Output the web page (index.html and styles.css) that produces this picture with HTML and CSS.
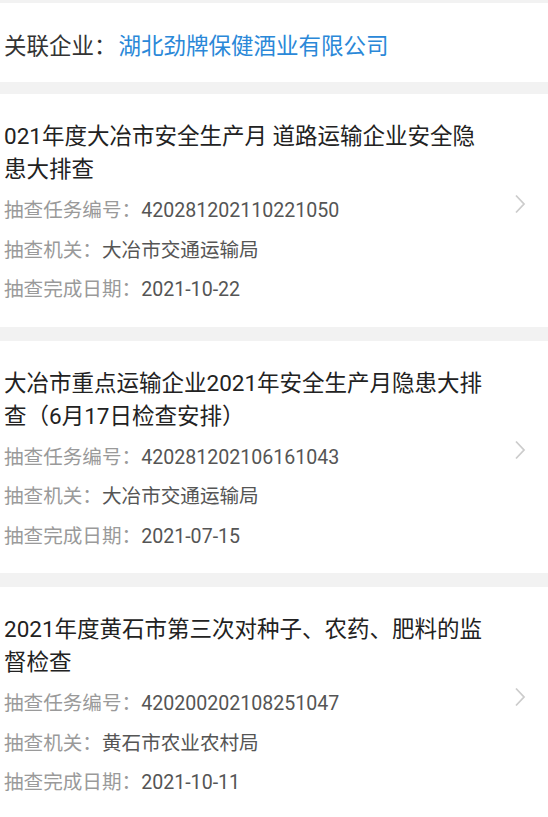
FILE: index.html
```html
<!DOCTYPE html>
<html lang="zh-CN">
<head>
  <meta charset="UTF-8">
  <meta name="viewport" content="width=device-width, initial-scale=1">
  <title>抽查检查</title>
  <link rel="stylesheet" href="styles.css">
</head>
<body>
  <!-- 关联企业 -->
  <div class="empresa">
    <span class="empresa-label">关联企业：</span><span class="empresa-nome">湖北劲牌保健酒业有限公司</span>
  </div>

  <div class="item primeiro">
    <div class="item-conteudo">
      <div class="item-titulo">021年度大冶市安全生产月 道路运输企业安全隐患大排查</div>
      <div class="item-meta">
        <div><span class="rotulo">抽查任务编号：</span>420281202110221050</div>
        <div><span class="rotulo">抽查机关：</span>大冶市交通运输局</div>
        <div><span class="rotulo">抽查完成日期：</span>2021-10-22</div>
      </div>
    </div>
    <div class="seta">
      <svg width="12" height="20" viewBox="0 0 12 20"><path d="M2 1.5 L10 10 L2 18.5" fill="none" stroke="#cccccc" stroke-width="1.8"/></svg>
    </div>
  </div>

  <div class="item">
    <div class="item-conteudo">
      <div class="item-titulo">大冶市重点运输企业2021年安全生产月隐患大排查（6月17日检查安排）</div>
      <div class="item-meta">
        <div><span class="rotulo">抽查任务编号：</span>420281202106161043</div>
        <div><span class="rotulo">抽查机关：</span>大冶市交通运输局</div>
        <div><span class="rotulo">抽查完成日期：</span>2021-07-15</div>
      </div>
    </div>
    <div class="seta">
      <svg width="12" height="20" viewBox="0 0 12 20"><path d="M2 1.5 L10 10 L2 18.5" fill="none" stroke="#cccccc" stroke-width="1.8"/></svg>
    </div>
  </div>

  <div class="item">
    <div class="item-conteudo">
      <div class="item-titulo">2021年度黄石市第三次对种子、农药、肥料的监督检查</div>
      <div class="item-meta">
        <div><span class="rotulo">抽查任务编号：</span>420200202108251047</div>
        <div><span class="rotulo">抽查机关：</span>黄石市农业农村局</div>
        <div><span class="rotulo">抽查完成日期：</span>2021-10-11</div>
      </div>
    </div>
    <div class="seta">
      <svg width="12" height="20" viewBox="0 0 12 20"><path d="M2 1.5 L10 10 L2 18.5" fill="none" stroke="#cccccc" stroke-width="1.8"/></svg>
    </div>
  </div>
</body>
</html>
```

FILE: styles.css
```css
body {
  margin: 0;
  padding-top: 3px;
  background-color: #f2f2f2;
  font-family: Roboto, "Noto Sans CJK SC", sans-serif;
  color: #222;
}
.empresa {
  background-color: #fff;
  height: 79px;
  padding-left: 4px;
  display: flex;
  align-items: center;
  padding-top: 3px;
  box-sizing: border-box;
  font-size: 22.5px;
}
.empresa-label {
  color: #333;
  margin-right: 2px;
}
.empresa-nome {
  color: #2a88d8;
}
.item {
  background-color: #fff;
  margin-top: 14px;
  padding: 26px 0 17px 4px;
  display: flex;
  align-items: center;
}
.item.primeiro {
  margin-top: 12px;
}
.item-conteudo {
  flex: 1;
  padding-right: 12px;
}
.item-titulo {
  font-size: 22.5px;
  line-height: 33px;
  color: #222;
}
.item-meta {
  margin-top: 5px;
  font-size: 19.6px;
  line-height: 39.5px;
  color: #555;
}
.rotulo {
  color: #9a9a9a;
}
.seta {
  width: 36px;
  margin-right: 10px;
  margin-bottom: 22px;
  display: flex;
  justify-content: center;
}
.seta svg {
  display: block;
}
```
